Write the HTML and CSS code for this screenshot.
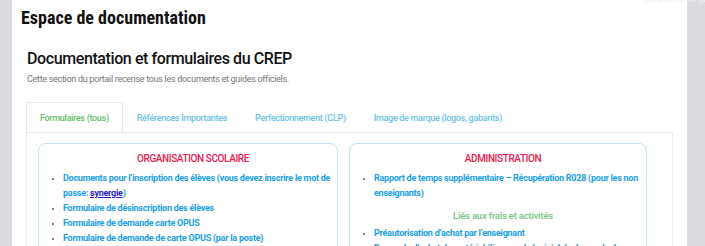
FILE: index.html
```html
<!DOCTYPE html>
<html lang="fr">
<head>
<meta charset="utf-8">
<title>Espace de documentation</title>
<link rel="stylesheet" href="styles.css">
</head>
<body>
<div class="shell">
  <div class="rail-left"></div>
  <main class="main">
    <h1 class="page-title">Espace de documentation</h1>
    <section class="doc">
      <h2 class="doc-title">Documentation et formulaires du CREP</h2>
      <p class="doc-intro">Cette section du portail recense tous les documents et guides officiels.</p>
      <nav class="tabs">
        <a class="tab tab-active">Formulaires (tous)</a>
        <a class="tab">Références Importantes</a>
        <a class="tab">Perfectionnement (CLP)</a>
        <a class="tab">Image de marque (logos, gabarits)</a>
      </nav>
      <div class="panel">
        <div class="card">
          <h3 class="card-title">ORGANISATION SCOLAIRE</h3>
          <ul class="links">
            <li><a>Documents pour l’inscription des élèves (vous devez inscrire le mot de passe: <span class="pw">synergie</span>)</a></li>
            <li><a>Formulaire de désinscription des élèves</a></li>
            <li><a>Formulaire de demande carte OPUS</a></li>
            <li><a>Formulaire de demande de carte OPUS (par la poste)</a></li>
          </ul>
        </div>
        <div class="card">
          <h3 class="card-title">ADMINISTRATION</h3>
          <ul class="links">
            <li><a>Rapport de temps supplémentaire – Récupération R028 (pour les non enseignants)</a></li>
          </ul>
          <h4 class="card-sub">Liés aux frais et activités</h4>
          <ul class="links">
            <li><a>Préautorisation d’achat par l’enseignant</a></li>
            <li><a>Demande d’achat de matériel (lien vers le logiciel de demande de matériel)</a></li>
          </ul>
        </div>
      </div>
    </section>
  </main>
  <div class="rail-right"></div>
  <div class="greeting">Bonjour, Anick (Signer)</div>
</div>
</body>
</html>
```

FILE: styles.css
```css
* { box-sizing: border-box; }
html, body { margin: 0; padding: 0; background: #fff; }
body { font-family: Roboto, "Liberation Sans", sans-serif; overflow: hidden; height: 246px; }

.shell {
  position: relative;
  display: grid;
  grid-template-columns: 12px 1fr 18px;
  height: 246px;
}
.rail-left, .rail-right { background: #dcdae0; }
.main { padding: 5px 0 0 9px; overflow: hidden; }

.page-title {
  margin: 0;
  font-family: Roboto, sans-serif;
  font-size: 18px;
  font-stretch: 75%;
  font-weight: 700;
  line-height: 25px;
  color: #111;
}

.doc { padding: 19px 14px 0 5px; }
.doc-title {
  margin: 0 0 0 1px;
  font-size: 16px;
  font-weight: 500;
  line-height: 20px;
  letter-spacing: -0.4px;
  color: #111;
}
.doc-intro {
  margin: 4px 0 0 1px;
  font-size: 9px;
  line-height: 12px;
  letter-spacing: -0.3px;
  color: #777;
}

.tabs { display: flex; margin-top: 17px; height: 30px; }
.tab {
  display: flex;
  align-items: center;
  padding: 0 13px;
  font-size: 9px;
  font-weight: 500;
  letter-spacing: -0.3px;
  color: #6cc2e6;
  border: 1px solid transparent;
  border-bottom: none;
}
.tab-active {
  color: #66c06a;
  border-color: #e6e6e6;
  background: #fff;
}

.panel {
  display: grid;
  grid-template-columns: 300px 298px;
  column-gap: 11px;
  border: 1px solid #ececec;
  padding: 10px 11px 0;
  height: 200px;
}
.card {
  border: 1px solid #bfe3f0;
  border-radius: 8px;
  padding: 7px 6px 0 16px;
}
.card-title {
  margin: 0 0 4px;
  text-align: center;
  font-size: 10px;
  font-weight: 500;
  line-height: 16px;
  letter-spacing: -0.4px;
  color: #ea1b4f;
}
.card-sub {
  margin: 7px 0 2px;
  text-align: center;
  font-size: 9.5px;
  font-weight: 500;
  line-height: 16px;
  letter-spacing: -0.2px;
  color: #77c382;
}
.links { margin: 0; padding: 0 0 0 8px; }
.links li {
  font-size: 9px;
  font-weight: 700;
  line-height: 15px;
  letter-spacing: -0.25px;
  color: #555;
}
.links li::marker { font-size: 7px; }
.links a { color: #1aa0e6; }
.pw { color: #2a1fc8; text-decoration: underline; }

.greeting {
  position: absolute;
  top: -5px;
  left: 645px;
  font-size: 8px;
  font-weight: 500;
  color: #f2f2f2;
  white-space: nowrap;
}
```
